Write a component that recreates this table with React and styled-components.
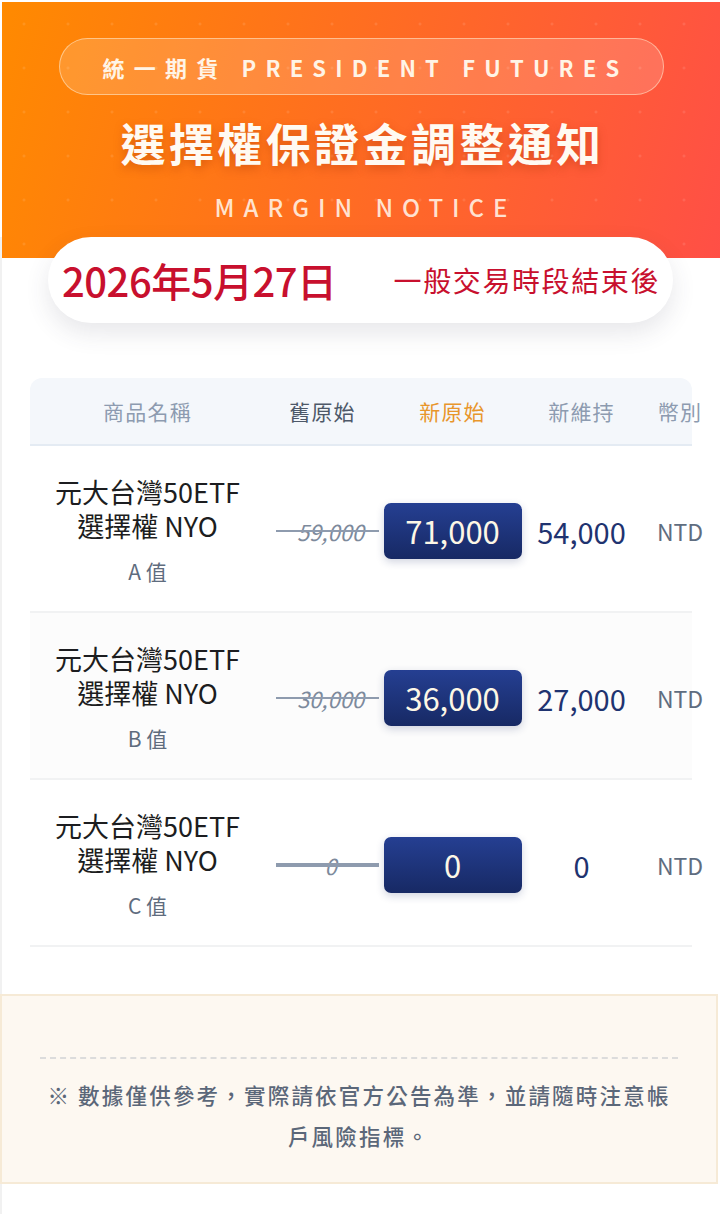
import React from 'react';
import styled, { createGlobalStyle } from 'styled-components';

const GlobalStyle = createGlobalStyle`
  html, body {
    margin: 0;
    padding: 0;
    background: #ffffff;
    overflow-x: hidden;
  }

  body {
    font-family: "Noto Sans CJK TC", "Noto Sans", sans-serif;
  }
`;

const Page = styled.div`
  padding: 2px 0 0 2px;
  width: 720px;
  box-sizing: border-box;
`;

const Sheet = styled.div`
  border-left: 2px solid #f1f1f1;
  margin-left: -2px;
  padding-bottom: 30px;
`;

const HeaderBand = styled.header`
  background-color: #ff7614;
  background-image:
    radial-gradient(rgba(255, 255, 255, 0.1) 1.2px, transparent 1.8px),
    linear-gradient(105deg, #ff8a00 0%, #ff6f1f 45%, #ff4f46 100%);
  background-size: 44px 44px, 100% 100%;
  padding: 36px 0 36px;
  display: flex;
  flex-direction: column;
  align-items: center;
`;

const BrandPill = styled.div`
  width: 605px;
  height: 57px;
  box-sizing: border-box;
  border-radius: 29px;
  border: 1.5px solid rgba(255, 236, 210, 0.55);
  background: rgba(255, 255, 255, 0.16);
  display: flex;
  align-items: center;
  justify-content: center;
  color: #fff4e6;
  font-size: 22px;
  font-weight: 700;
  letter-spacing: 9.2px;
  padding-left: 9px;
`;

const Title = styled.h1`
  margin: 20px 0 0;
  font-size: 45px;
  line-height: 56px;
  font-weight: 700;
  letter-spacing: 3.4px;
  padding-left: 3px;
  color: #fffaf2;
  text-shadow: 0 4px 10px rgba(160, 50, 0, 0.35);
`;

const Subtitle = styled.div`
  margin-top: 21px;
  font-size: 24px;
  line-height: 30px;
  font-weight: 500;
  letter-spacing: 9px;
  padding-left: 9px;
  color: rgba(255, 244, 232, 0.88);
`;

const DateCard = styled.div`
  margin: -21px 47px 0 46px;
  height: 86px;
  border-radius: 43px;
  background: #ffffff;
  box-shadow: 0 10px 24px rgba(60, 60, 80, 0.12);
  display: flex;
  align-items: center;
  justify-content: space-between;
  padding: 0 13px 0 14px;
  color: #c8102e;
  position: relative;
`;

const DateText = styled.div`
  font-size: 40px;
  font-weight: 500;
  letter-spacing: -0.5px;
`;

const SessionText = styled.div`
  font-size: 28px;
  font-weight: 400;
  letter-spacing: 1.6px;
`;

const Table = styled.div`
  margin: 55px 0 0 28px;
  width: 662px;
`;

const HeadRow = styled.div`
  display: grid;
  grid-template-columns: 235px 115px 145px 113px 84px;
  align-items: center;
  height: 66px;
  background: #f4f7fb;
  border-radius: 12px 12px 0 0;
  border-bottom: 2px solid #e4ebf3;
`;

const HeadCell = styled.div`
  text-align: center;
  font-size: 21px;
  font-weight: 400;
  letter-spacing: 1.2px;
  color: ${p => p.$tone === 'accent' ? '#e8962c' : p.$tone === 'dark' ? '#4d5868' : '#8d9bb0'};
`;

const Row = styled.div`
  display: grid;
  grid-template-columns: 235px 115px 145px 113px 84px;
  align-items: center;
  height: 165px;
  background: ${p => p.$alt ? '#fcfcfc' : '#ffffff'};
  border-bottom: 2px solid #f1f2f3;
`;

const NameCell = styled.div`
  display: flex;
  flex-direction: column;
  align-items: center;
  margin-top: 2px;
`;

const NameText = styled.div`
  width: 200px;
  text-align: center;
  font-size: 27px;
  line-height: 34px;
  font-weight: 400;
  color: #1c1d20;
`;

const SubLabel = styled.div`
  margin-top: 14px;
  font-size: 21px;
  line-height: 28px;
  font-weight: 400;
  color: #5f6c7e;
`;

const OldCell = styled.div`
  display: flex;
  justify-content: center;
  padding-left: 10px;
  padding-top: 4px;
`;

const Struck = styled.div`
  position: relative;
  width: 103px;
  text-align: center;
  font-size: 22px;
  font-style: italic;
  color: #7d8a9c;
  padding-left: 6px;
  box-sizing: border-box;

  &::after {
    content: '';
    position: absolute;
    left: 0;
    right: 0;
    top: 50%;
    height: ${p => p.$thick ? '4px' : '2px'};
    margin-top: ${p => p.$thick ? '-2px' : '-1px'};
    background: #8e9bae;
  }
`;

const NewCell = styled.div`
  display: flex;
  justify-content: center;
  padding-top: 4px;
`;

const NewBadge = styled.div`
  width: 138px;
  height: 56px;
  border-radius: 7px;
  background: linear-gradient(180deg, #253f92 0%, #172964 100%);
  box-shadow: 0 3px 8px rgba(23, 41, 100, 0.2);
  display: flex;
  align-items: center;
  justify-content: center;
  color: #fdf7e6;
  font-size: 31px;
  font-weight: 400;
`;

const MaintCell = styled.div`
  text-align: center;
  font-size: 29px;
  font-weight: 400;
  color: #1f3370;
  padding-top: 4px;
`;

const CurrencyCell = styled.div`
  text-align: center;
  font-size: 23px;
  font-weight: 400;
  color: #5f6d80;
  padding-top: 4px;
`;

const NoteBox = styled.div`
  margin-top: 47px;
  margin-left: -2px;
  width: 718px;
  box-sizing: border-box;
  background: #fdf8f1;
  border: 2px solid #f6ead6;
  padding: 61px 38px 26px;
`;

const Divider = styled.div`
  border-top: 2px dashed #dcdcdc;
  margin-bottom: 15px;
`;

const NoteText = styled.p`
  margin: 0;
  text-align: center;
  font-size: 21.5px;
  line-height: 41px;
  font-weight: 500;
  letter-spacing: 2.2px;
  color: #5b6779;
`;

const rows = [
  { label: 'A 值', oldVal: '59,000', newVal: '71,000', maint: '54,000' },
  { label: 'B 值', oldVal: '30,000', newVal: '36,000', maint: '27,000' },
  { label: 'C 值', oldVal: '0', newVal: '0', maint: '0' },
];

export default function App() {
  return (
    <Page lang="zh-Hant-TW">
      <GlobalStyle />
      <HeaderBand>
        <BrandPill>統一期貨 PRESIDENT FUTURES</BrandPill>
        <Title>選擇權保證金調整通知</Title>
        <Subtitle>MARGIN NOTICE</Subtitle>
      </HeaderBand>
      <Sheet>
        <DateCard>
          <DateText>2026年5月27日</DateText>
          <SessionText>一般交易時段結束後</SessionText>
        </DateCard>

        <Table>
          <HeadRow>
            <HeadCell>商品名稱</HeadCell>
            <HeadCell $tone="dark">舊原始</HeadCell>
            <HeadCell $tone="accent">新原始</HeadCell>
            <HeadCell>新維持</HeadCell>
            <HeadCell>幣別</HeadCell>
          </HeadRow>
          {rows.map((r, i) => (
            <Row key={r.label} $alt={i === 1}>
              <NameCell>
                <NameText>元大台灣50ETF 選擇權 NYO</NameText>
                <SubLabel>{r.label}</SubLabel>
              </NameCell>
              <OldCell>
                <Struck $thick={r.oldVal === '0'}>{r.oldVal}</Struck>
              </OldCell>
              <NewCell>
                <NewBadge>{r.newVal}</NewBadge>
              </NewCell>
              <MaintCell>{r.maint}</MaintCell>
              <CurrencyCell>NTD</CurrencyCell>
            </Row>
          ))}
        </Table>

        <NoteBox>
          <Divider />
          <NoteText>※ 數據僅供參考，實際請依官方公告為準，並請隨時注意帳戶風險指標。</NoteText>
        </NoteBox>
      </Sheet>
    </Page>
  );
}
